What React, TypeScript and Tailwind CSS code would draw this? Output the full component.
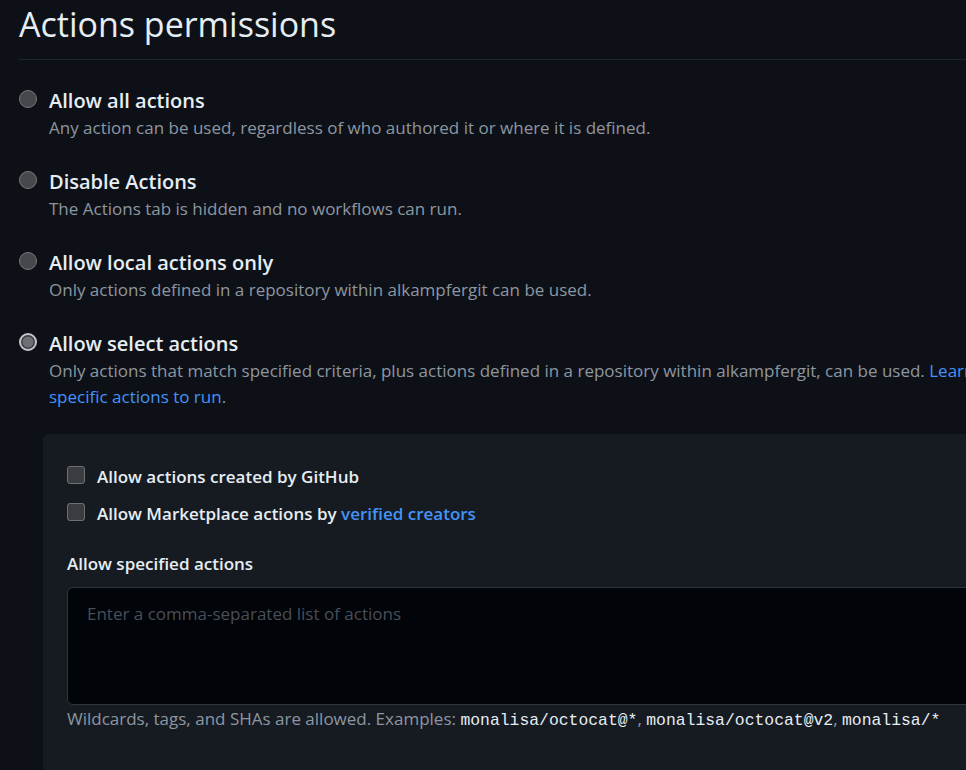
import type { ReactNode } from "react";

const font = { fontFamily: '"Open Sans", "Noto Sans", sans-serif' };
const mono = { fontFamily: '"Liberation Mono", monospace', fontSize: 16.4 };

function Radio({ checked }: { checked?: boolean }) {
  if (checked) {
    return (
      <svg width="18" height="18" viewBox="0 0 18 18" className="shrink-0 mt-[3px]">
        <circle cx="9" cy="9" r="8" fill="#3a3d42" stroke="#c4c8cc" strokeWidth="2" />
        <circle cx="9" cy="9" r="5.5" fill="#6c7075" />
      </svg>
    );
  }
  return (
    <svg width="18" height="18" viewBox="0 0 18 18" className="shrink-0 mt-[3px]">
      <circle cx="9" cy="9" r="8.5" fill="#46484c" stroke="#76787c" strokeWidth="1" />
    </svg>
  );
}

function Checkbox() {
  return (
    <span className="mt-px block h-[18px] w-[18px] shrink-0 rounded-[3px] border border-[#6e7073] bg-[#3b3c40]" />
  );
}

function Option({
  title,
  checked,
  children,
}: {
  title: string;
  checked?: boolean;
  children: ReactNode;
}) {
  return (
    <div className="flex gap-3 mb-[27px]">
      <Radio checked={checked} />
      <div>
        <div className="text-[20px] leading-[28px] font-semibold text-[#e6edf3]">
          {title}
        </div>
        <div className="text-[17px] leading-[26px] text-[#8d96a0] whitespace-nowrap">
          {children}
        </div>
      </div>
    </div>
  );
}

export default function App() {
  return (
    <div className="h-[770px] w-full overflow-hidden bg-[#0d1117]" style={font}>
      <div className="w-[1300px] pl-[19px]">
        <h2 className="pt-[2px] pb-[12px] text-[34px] leading-[45px] font-normal text-[#e6edf3] border-b border-[#21262d]">
          Actions permissions
        </h2>

        <div className="pt-[27px]">
          <Option title="Allow all actions">
            Any action can be used, regardless of who authored it or where it is defined.
          </Option>
          <Option title="Disable Actions">
            The Actions tab is hidden and no workflows can run.
          </Option>
          <Option title="Allow local actions only">
            Only actions defined in a repository within alkampfergit can be used.
          </Option>
          <div className="flex gap-3">
            <Radio checked />
            <div>
              <div className="text-[20px] leading-[28px] font-semibold text-[#e6edf3]">
                Allow select actions
              </div>
              <div className="text-[17px] leading-[26px] text-[#8d96a0] whitespace-nowrap">
                Only actions that match specified criteria, plus actions defined in a repository
                within alkampfergit, can be used.{" "}
                <a className="text-[#4493f8]">
                  Learn more about allowing
                  <br />
                  specific actions to run
                </a>
                .
              </div>
            </div>
          </div>
        </div>

        <div className="ml-6 mt-6 rounded-md bg-[#161b22] px-6 pt-[31px] pb-10">
          <label className="flex gap-3 text-[17px] leading-[24px] font-semibold text-[#e6edf3]">
            <Checkbox />
            Allow actions created by GitHub
          </label>
          <label className="mt-[13px] flex gap-3 text-[17px] leading-[24px] font-semibold text-[#e6edf3]">
            <Checkbox />
            <span>
              Allow Marketplace actions by{" "}
              <a className="text-[#4493f8]">verified creators</a>
            </span>
          </label>

          <div className="mt-[26px] text-[17px] leading-[24px] font-semibold text-[#e6edf3]">
            Allow specified actions
          </div>
          <div className="mt-[11px] h-[118px] rounded-md border border-[#30363d] bg-[#010409] pl-[19px] pt-[14px] text-[17px] leading-[24px] text-[#484f58]">
            Enter a comma-separated list of actions
          </div>
          <div className="mt-[2px] text-[17px] leading-[24px] text-[#8d96a0]">
            Wildcards, tags, and SHAs are allowed. Examples:{" "}
            <code className="text-[#e6edf3]" style={mono}>
              monalisa/octocat@*
            </code>
            ,{" "}
            <code className="text-[#e6edf3]" style={mono}>
              monalisa/octocat@v2
            </code>
            ,{" "}
            <code className="text-[#e6edf3]" style={mono}>
              monalisa/*
            </code>
          </div>
        </div>
      </div>
    </div>
  );
}
